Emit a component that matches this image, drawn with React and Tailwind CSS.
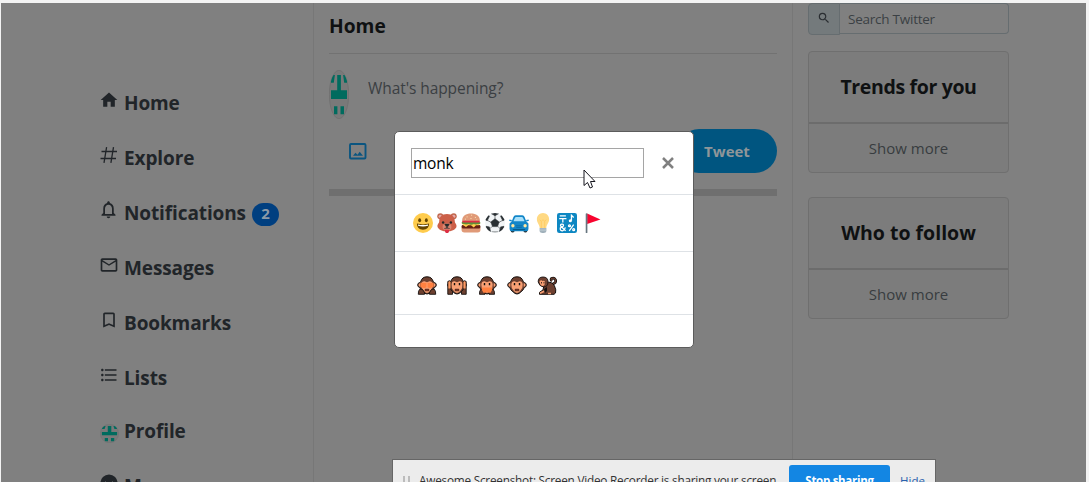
import React from "react";
import {
  MdHome,
  MdNotificationsNone,
  MdMailOutline,
  MdBookmarkBorder,
  MdFormatListBulleted,
  MdSearch,
} from "react-icons/md";

const Hash = () => (
  <svg className="shrink-0" width="18" height="18" viewBox="0 0 18 18" fill="none" stroke="currentColor" strokeWidth="1.3">
    <path d="M1.500 5.500H17M.5 12.500H16M6.600 1.200L4 16.800M13.500 1.200L10.900 16.800" />
  </svg>
);

const Avatar = ({ className }) => (
  <svg className={className} viewBox="0 0 20 20" preserveAspectRatio="none">
    <clipPath id="round">
      <ellipse cx="10" cy="10" rx="9.600" ry="9.800" />
    </clipPath>
    <ellipse cx="10" cy="10" rx="9.700" ry="9.850" fill="#797979" stroke="#6e6e6e" strokeWidth=".4" />
    <g clipPath="url(#round)" fill="#006b5e">
      <path d="M8.200 2h3.700v6.300H18v3.500H2V8.300h6.200zM2 2h3.900L4.800 5.200H2zM14.100 2H18v3.200h-2.800zM5 14.800h3.400v3.300H5zM11.500 14.800H15v3.300h-3.500z" />
    </g>
  </svg>
);

const Grin = () => (
  <svg width="20" height="20" viewBox="0 0 36 36">
    <circle cx="18" cy="18" r="18" fill="#ffcc4d" />
    <ellipse cx="12" cy="13" rx="2.600" ry="3.600" fill="#664500" />
    <ellipse cx="24" cy="13" rx="2.600" ry="3.600" fill="#664500" />
    <path d="M7 19q11 3 22 0q0 11-11 11T7 19z" fill="#664500" />
    <path d="M9 20.500q9 2 18 0v2.500q-9 2.500-18 0z" fill="#fff" />
  </svg>
);

const Bear = () => (
  <svg width="20" height="20" viewBox="0 0 36 36">
    <circle cx="6" cy="6" r="5.500" fill="#c1694f" />
    <circle cx="30" cy="6" r="5.500" fill="#c1694f" />
    <circle cx="6" cy="6" r="3" fill="#e6aaaa" />
    <circle cx="30" cy="6" r="3" fill="#e6aaaa" />
    <path d="M18 2C8 2 4 8 4 15C4 19 0 20 1 25C3 30 10 33 18 33S33 30 35 25C36 20 32 19 32 15C32 8 28 2 18 2z" fill="#cc5f48" />
    <ellipse cx="18" cy="25" rx="8" ry="6.500" fill="#d98570" />
    <path d="M14 20h8l-2 4h-4zM13 28q5 0 5-4q0 4 5 4" fill="#272b2b" stroke="#272b2b" strokeWidth="1" />
    <circle cx="11" cy="17" r="2.200" fill="#272b2b" />
    <circle cx="25" cy="17" r="2.200" fill="#272b2b" />
    <path d="M14 30h8q0 6-4 6t-4-6z" fill="#dd2e44" />
  </svg>
);

const Burger = () => (
  <svg width="20" height="20" viewBox="0 0 36 36">
    <path d="M2 14C2 5 9 1 18 1s16 4 16 13c0 3-32 3-32 0z" fill="#e09a78" />
    <rect x="1" y="23" width="34" height="12" rx="5" fill="#e09a78" />
    <rect x="1" y="21" width="34" height="7" rx="3" fill="#662113" />
    <path d="M1 18h34l-3 4-5 0-4 4-5-4-5 0-4 3-5-3z" fill="#ffcc4d" />
    <path d="M1 17q3-3 7-1q4-2 10 0q5-2 10 0q5-1 7 1q0 4-4 3q-5 1-8 0q-5 2-9 0q-5 1-9 0q-4 0-4-3z" fill="#5c913b" />
    <rect x="2" y="14" width="32" height="3" rx="1.500" fill="#dd2e44" />
    <path d="M10 7h2M18 4h2M25 8h2M17 10h2M7 11h2M28 12h1" stroke="#ffe8b6" strokeWidth="1.500" />
  </svg>
);

const Ball = () => (
  <svg width="20" height="20" viewBox="0 0 36 36">
    <clipPath id="ball"><circle cx="18" cy="18" r="18" /></clipPath>
    <circle cx="18" cy="18" r="18" fill="#f1f4f6" />
    <g clipPath="url(#ball)" fill="#292f33" stroke="#292f33">
      <path d="M18 10.500l7.500 5.500-3 8.500h-9l-3-8.500z" />
      <path d="M11 1l7 4 7-4-1-3H12zM0 12l4 2 4-8-4-5-7 7zM36 12l-4 2-4-8 4-5 7 7zM2 24l6 1 2 8-3 4-9-7zM34 24l-6 1-2 8 3 4 9-7z" />
      <path d="M18 4v8M4 13l7 4M32 13l-7 4M13 24l-4 4M23 24l4 4M12 34h12" fill="none" strokeWidth="1" />
    </g>
  </svg>
);

const Car = () => (
  <svg width="20" height="20" viewBox="0 0 36 36">
    <rect x="3" y="27" width="7" height="8" rx="3" fill="#292f33" />
    <rect x="26" y="27" width="7" height="8" rx="3" fill="#292f33" />
    <path d="M5 15l3-8q1-3 4-3h12q3 0 4 3l3 8 4 4v10q0 4-4 4H5q-4 0-4-4V19z" fill="#1286c8" />
    <path d="M8 15l3-7q.5-1 2-1h10q1.500 0 2 1l3 7z" fill="#a8e0fa" />
    <path d="M0 12h4l2 3H3q-3 0-3-3zM36 12h-4l-2 3h3q3 0 3-3z" fill="#1286c8" />
    <circle cx="7" cy="23" r="3" fill="#ffe8a0" />
    <circle cx="29" cy="23" r="3" fill="#ffe8a0" />
    <path d="M7 30h22" stroke="#075582" strokeWidth="1.800" />
    <path d="M12 23h12M13 26h10" stroke="#0b639a" strokeWidth="1.200" />
  </svg>
);

const Bulb = () => (
  <svg width="20" height="20" viewBox="0 0 36 36">
    <path d="M29 11.500C29 5 24 0 18 0S7 5 7 11.500C7 18 12 20 12 27h12c0-7 5-9 5-15.500z" fill="#ffd983" />
    <path d="M12 12l3 3 3-3 3 3 3-3M15 15v12M21 15v12" fill="none" stroke="#ffc44e" strokeWidth="1" />
    <path d="M12 27h12v5q0 4-6 4t-6-4z" fill="#99aab5" />
    <path d="M12 29h12M12 32h12" stroke="#ccd6dd" strokeWidth="1.300" />
  </svg>
);

const Symbols = () => (
  <svg width="20" height="20" viewBox="0 0 36 36">
    <rect width="36" height="36" rx="4" fill="#0d87c2" />
    <g fill="none" stroke="#fff" strokeWidth="2.300">
      <path d="M5 5h11M4 10h13M10.500 10v7M26 14V4l4 4" />
      <path d="M15.500 32L7 24q-2-4 2-4t2 4l-5 3q-1 5 4 5q4-1 5-6M22 32l8-11" />
      <circle cx="22.500" cy="23" r="1.700" />
      <circle cx="30" cy="30" r="1.700" />
    </g>
    <circle cx="24" cy="14" r="2.800" fill="#fff" />
  </svg>
);

const Flag = () => (
  <svg width="20" height="20" viewBox="0 0 36 36">
    <path d="M11 1l24 10.500L11 20z" fill="#f8042f" />
    <path d="M10 2v33" stroke="#66757f" strokeWidth="3" strokeLinecap="round" />
  </svg>
);

const Face = ({ children, mouth = true, eyes = true }) => (
  <svg width="20" height="19" viewBox="0 0 20 19">
    <path d="M3.800 5.500Q5 .8 10 .8t6.200 4.700l1.200 1q1.900.5 1.900 2.500t-2.100 2.600q-.6 2.400-3.200 4.200-2 2.200-4 2.200t-4-2.200q-2.600-1.800-3.200-4.200Q.7 11 .7 9t1.900-2.500z" fill="#6d4030" stroke="#15100e" strokeWidth="1" />
    <path d="M1.500 9q0-1.700 1.800-1.700v3.500Q1.500 10.600 1.500 9zM18.500 9q0-1.700-1.800-1.700v3.500q1.800-.2 1.800-1.800z" fill="#f9a074" />
    <path d="M4.300 8.500Q4.800 5 7.500 5.200L10 6.300l2.500-1.100q2.700-.2 3.200 3.300.2 3.500-2 5.800-1.700 2.700-3.700 2.700t-3.700-2.700q-2.200-2.300-2-5.800z" fill="#f9a074" />
    {eyes && <path d="M7.500 7v2.300M12.500 7v2.300" stroke="#15100e" strokeWidth="1.400" />}
    {children}
    {mouth && <path d="M8.200 13.200h3.600v1.600H8.200z" fill="#9c3020" stroke="#15100e" strokeWidth=".6" />}
  </svg>
);

const SeeNo = () => (
  <Face eyes={false}>
    <path d="M1.300 18.300q-.3-3.600 1.700-5.300l2.300.3q1.700 2 2.200 3.500v1.500zM18.700 18.300q.3-3.600-1.700-5.300l-2.300.3q-1.700 2-2.200 3.500v1.500z" fill="#6d4030" stroke="#15100e" strokeWidth=".9" />
    <path d="M3.500 6.800h13V11l-4 1.300L10 11l-2.500 1.300-4-1.300z" fill="#ff8040" />
    <path d="M10 7v4" stroke="#ffb080" strokeWidth=".7" />
  </Face>
);
const HearNo = () => (
  <Face>
    <path d="M.8 18.300V5.500q1.700-1.500 3 0v8l1.700 2v2.800zM19.200 18.300V5.500q-1.700-1.500-3 0v8l-1.700 2v2.800z" fill="#6d4030" stroke="#15100e" strokeWidth=".9" />
    <path d="M1.400 6q1.100-1.300 2.200 0v6.500H1.400zM18.600 6q-1.100-1.300-2.200 0v6.500h2.200z" fill="#ff9a63" />
  </Face>
);
const SpeakNo = () => (
  <Face mouth={false}>
    <path d="M2.500 18.300q-.3-3.600 1.500-5l4 2.500v2.500zM17.500 18.300q.3-3.600-1.500-5l-4 2.500v2.500z" fill="#6d4030" stroke="#15100e" strokeWidth=".9" />
    <path d="M4.800 11.500h10.400V14l-1.700 2.800h-2L10 16l-1.500.8h-2L4.800 14z" fill="#ff8040" />
  </Face>
);
const Monkey = () => (
  <svg width="20" height="19" viewBox="0 0 20 19">
    <path d="M15.500 8q4-1 3-4.200Q17 1.200 14.500 2.500q-1 1.500.5 2.500" fill="none" stroke="#15100e" strokeWidth="2.700" />
    <path d="M15.500 8q4-1 3-4.200Q17 1.200 14.500 2.500q-1 1.500.5 2.500" fill="none" stroke="#6d4030" strokeWidth="1.200" />
    <path d="M9 6.500q6-1.500 8.500 3.500 2 4 1 7l-1.500 1.300H2.500v-2L6 14l1-5z" fill="#6d4030" stroke="#15100e" strokeWidth="1" />
    <path d="M1.200 6Q1 1 6 1t5 5q0 5-4.500 5Q2.500 10.500 1.200 6z" fill="#6d4030" stroke="#15100e" strokeWidth=".9" />
    <path d="M2.500 5.500q1.500-2 3-.5 2-1 2.500 1 0 4-2.500 4-2.500-.5-3-4.500z" fill="#f9a074" />
    <path d="M7 13l3-2v4l-2 2z" fill="#15100e" />
    <path d="M3 17.200l4-2M11 17.500h3" stroke="#f9a074" strokeWidth="1.700" />
    <path d="M4.500 6v1.500M7 6v1.500" stroke="#15100e" strokeWidth=".8" />
  </svg>
);

const MoreDot = () => (
  <svg width="18" height="18" viewBox="0 0 18 18">
    <circle cx="9" cy="9" r="8.600" fill="currentColor" />
    <path d="M5 7.500l4 3.500 4-3.500" fill="none" stroke="#6c6f71" />
  </svg>
);

const nav = [
  { label: "Home", icon: <MdHome className="shrink-0" size={20} /> },
  { label: "Explore", icon: <Hash /> },
  { label: "Notifications", icon: <MdNotificationsNone className="shrink-0" size={21} />, badge: 2 },
  { label: "Messages", icon: <MdMailOutline className="shrink-0" size={20} /> },
  { label: "Bookmarks", icon: <MdBookmarkBorder className="shrink-0" size={20} /> },
  { label: "Lists", icon: <MdFormatListBulleted className="shrink-0" size={20} /> },
];

const NavRow = ({ icon, label, badge }) => (
  <li className="flex h-[55px] items-center">
    <span className="-mt-[6px] flex w-[17px] justify-center">{icon}</span>
    <span className="ml-[7px] mt-[2px]">{label}</span>
    {badge && (
      <span className="ml-[6px] mt-[3px] flex h-[23px] w-[27px] items-center justify-center rounded-full bg-[#003f80] pb-px text-[15px] text-[#8c9aa8]">
        {badge}
      </span>
    )}
  </li>
);

const Card = ({ title, tracking }) => (
  <section className="flex h-[122px] flex-col rounded border border-[#6f6f6f] bg-[#7c7c7c] text-center">
    <h2 className={`flex h-[72px] items-center justify-center border-b-2 border-[#6c6c6c] text-[19.500px] font-bold text-[#0f1112] ${tracking}`}>
      {title}
    </h2>
    <p className="flex flex-1 items-center justify-center text-[15px] text-[#383c40]">Show more</p>
  </section>
);

export default function App() {
  return (
    <div className="relative h-[482px] w-full overflow-hidden bg-[#f3f3f3] pl-px pr-[3px] pt-[3px] font-['Open_Sans','Noto_Sans',sans-serif]">
      <div className="flex h-full bg-[#808080]">
        <nav className="w-[313px] shrink-0 border-r border-[#777] pl-[99px] pt-[72px] text-[19px] font-bold tracking-[-0.006em] text-[#212529]">
          <ul>
            {nav.map((n) => (
              <NavRow key={n.label} {...n} />
            ))}
            <li className="flex h-[53px] items-center">
              <Avatar className="mt-[3px] size-[19px]" />
              <span className="ml-[5px]">Profile</span>
            </li>
            <NavRow icon={<span><MoreDot /></span>} label="More" />
          </ul>
        </nav>

        <main className="w-[479px] shrink-0 border-r border-[#777] px-[15px]">
          <h1 className="flex h-[51px] items-center border-b border-[#727272] pb-[3px] text-[19.200px] font-bold text-[#0f1112]">Home</h1>
          <div className="flex pt-[16px]">
            <Avatar className="h-[49px] w-[20px]" />
            <p className="ml-[19px] mt-[6px] text-[15.500px] leading-6 tracking-[-0.005em] text-[#3b3f43]">What's happening?</p>
          </div>
          <div className="mt-[10px] flex h-[44px] items-center justify-between pl-[20px]">
            <svg width="18" height="17" viewBox="0 0 18 17" fill="none" stroke="#0b5580">
              <rect x="1" y="1" width="15.500" height="14.500" rx="1" strokeWidth="1.900" />
              <path d="M4 12.700l2.500-3 2 2 2.200-3 3.300 4z" fill="#0b5580" stroke="none" />
            </svg>
            <div className="flex h-[44px] w-[100px] items-center justify-center rounded-full bg-[#005580] pt-px text-[15px] font-bold text-[#8f9699]">Tweet</div>
          </div>
          <div className="mt-[16px] h-[7px] bg-[#6f6f6f]" />
        </main>

        <aside className="ml-[15px] w-[201px]">
          <div className="flex h-[32px] items-start">
            <span className="flex h-[32px] w-[32px] items-center justify-center rounded-l border border-[#666d70] bg-[#747a7c] pb-[2px] text-[#2a2e32]">
              <MdSearch size={14} />
            </span>
            <span className="flex h-[31px] flex-1 items-center rounded-r border border-l-0 border-[#666d70] pl-[8px] pt-[2px] text-[13.500px] tracking-[-0.018em] text-[#3b4044]">Search Twitter</span>
          </div>
          <div className="mt-[16px] flex flex-col gap-[24px]">
            <Card title="Trends for you" tracking="tracking-[-0.018em]" />
            <Card title="Who to follow" tracking="tracking-[0em]" />
          </div>
        </aside>
      </div>

      <div className="absolute left-[394px] top-[131px] h-[217px] w-[300px] rounded-[5px] border border-[#5c5c5c] bg-white">
        <div className="flex h-[63px] items-start border-b border-[#dee2e6] pl-[16px] pt-[16px]">
          <div className="flex h-[30px] w-[233px] items-center border border-[#a5a5a5] pl-px pt-px text-[15.500px] tracking-[-0.015em] text-black">monk</div>
          <svg className="ml-[18px] mt-[9px]" width="12" height="12" viewBox="0 0 12 12" stroke="#808080" strokeWidth="2.500">
            <path d="M1 1l10 10M11 1L1 11" />
          </svg>
        </div>
        <div className="flex h-[57px] items-center gap-[4px] border-b border-[#dee2e6] pl-[18px]">
          <Grin /><Bear /><Burger /><Ball /><Car /><Bulb /><Symbols /><Flag />
        </div>
        <div className="flex h-[63px] items-center gap-[10px] border-b border-[#dee2e6] pl-[22px] pt-[4px]">
          <SeeNo /><HearNo /><SpeakNo /><Face /><Monkey />
        </div>
      </div>

      <svg className="absolute left-[583px] top-[169px]" width="13" height="20" viewBox="0 0 13 20">
        <path d="M1 1v15.500L4.500 13.500 7 19l2.500-1L7.500 12.500H12z" fill="#fff" stroke="#16161e" strokeWidth="1" />
      </svg>

      <div className="absolute left-[392px] top-[459px] flex h-[44px] w-[544px] items-center border border-[#666] bg-[#ececec] text-[12px] text-[#333]">
        <span className="ml-[10px] mt-[2px] h-[13px] w-[7px] border-x-2 border-[#bcbcbc]" />
        <span className="ml-[9px] w-[370px] whitespace-nowrap text-[11.800px] tracking-[-0.020em]">Awesome Screenshot: Screen Video Recorder is sharing your screen.</span>
        <span className="flex h-[32px] w-[101px] items-center justify-center rounded-[3px] bg-[#1386e3] text-[11.500px] font-bold tracking-[-0.025em] text-white">Stop sharing</span>
        <span className="ml-[10px] text-[11.500px] text-[#2a62ae]">Hide</span>
      </div>
    </div>
  );
}
